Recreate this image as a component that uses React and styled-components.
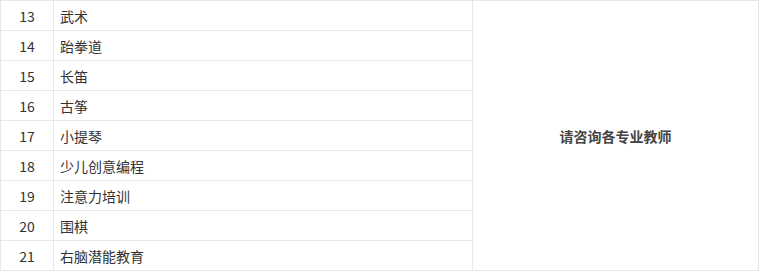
import React from 'react';
import styled, { createGlobalStyle } from 'styled-components';

const GlobalStyle = createGlobalStyle`
  html, body {
    margin: 0;
    padding: 0;
    background: #fff;
  }
  body {
    font-family: "Noto Sans CJK SC", "Noto Sans", sans-serif;
    color: #333;
  }
`;

const Table = styled.table`
  border-collapse: collapse;
  table-layout: fixed;
  width: 758px;
  font-size: 14px;
`;

const Col = styled.col`
  width: ${({ $w }) => $w}px;
`;

const Cell = styled.td`
  border: 1px solid #e3e8ed;
  height: 29px;
  padding: 0 ${({ $center }) => ($center ? '0' : '6px')};
  text-align: ${({ $center }) => ($center ? 'center' : 'left')};
  vertical-align: middle;
  line-height: 20px;
  color: #333;
`;

const NoteCell = styled(Cell)`
  font-weight: bold;
  color: #444;
`;

const rows = [
  [13, '武术'],
  [14, '跆拳道'],
  [15, '长笛'],
  [16, '古筝'],
  [17, '小提琴'],
  [18, '少儿创意编程'],
  [19, '注意力培训'],
  [20, '围棋'],
  [21, '右脑潜能教育'],
];

const App = () => {
  return (
    <>
      <GlobalStyle />
      <Table>
        <colgroup>
          <Col $w={53} />
          <Col $w={419} />
          <Col $w={286} />
        </colgroup>
        <tbody>
          {rows.map(([no, name], i) => (
            <tr key={no}>
              <Cell $center>{no}</Cell>
              <Cell>{name}</Cell>
              {i === 0 && (
                <NoteCell $center rowSpan={rows.length}>请咨询各专业教师</NoteCell>
              )}
            </tr>
          ))}
        </tbody>
      </Table>
    </>
  );
};

export default App;
